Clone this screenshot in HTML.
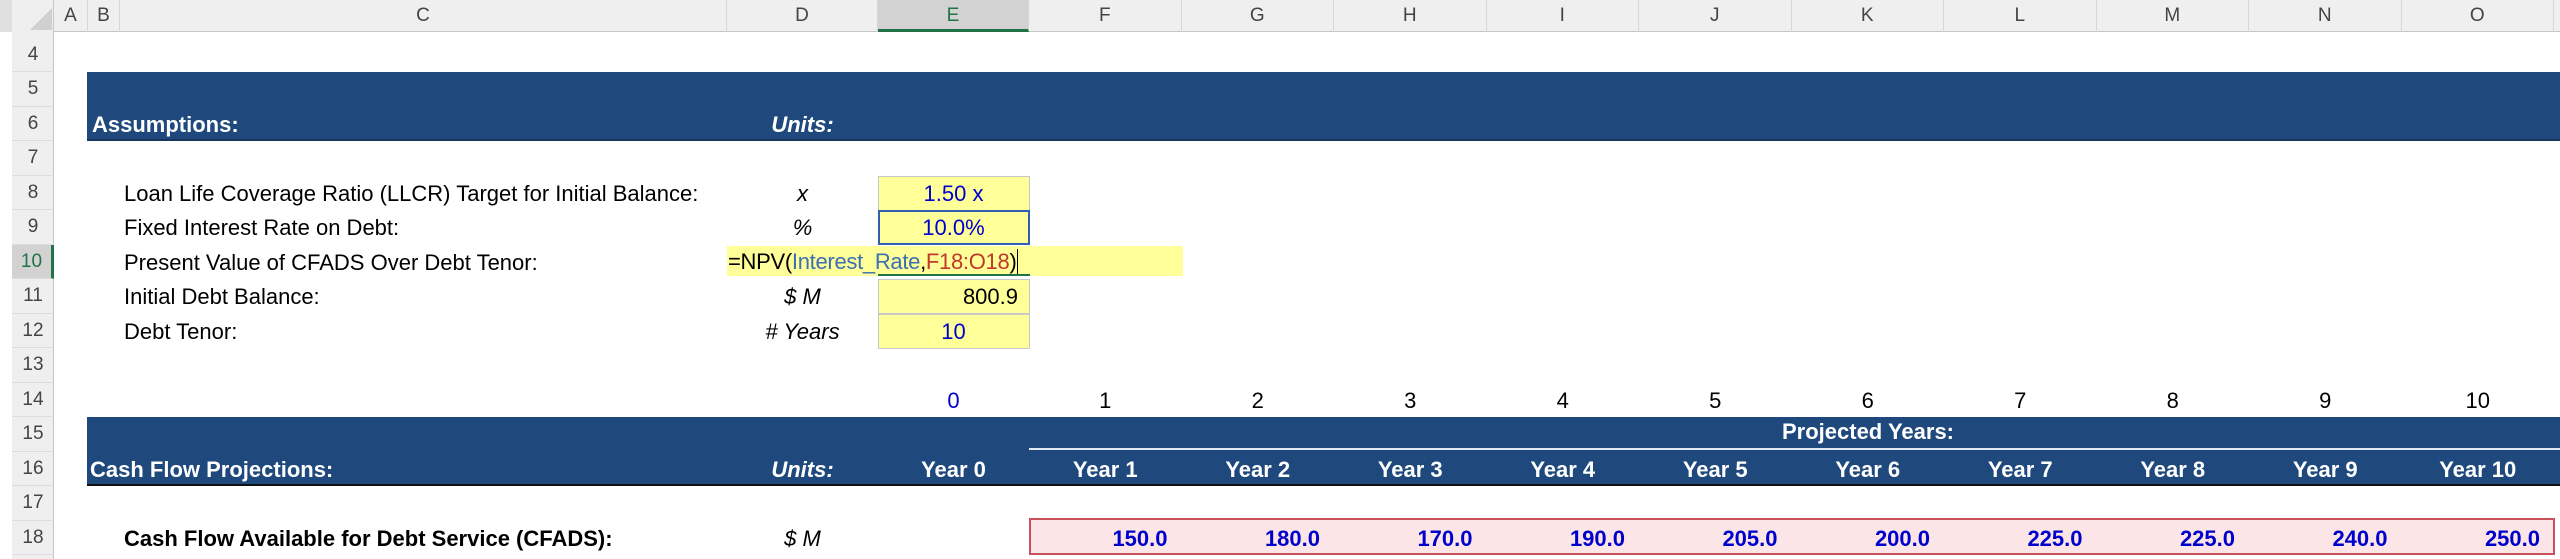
<!DOCTYPE html>
<html><head><meta charset="utf-8"><style>
*{margin:0;padding:0;box-sizing:border-box}
body{width:2560px;height:559px;overflow:hidden;background:#fff;font-family:"Liberation Sans",sans-serif;position:relative}
.a{position:absolute;white-space:nowrap}
.ch{top:0;height:32px;line-height:32px;text-align:center;font-size:19px;color:#444;border-right:1px solid #d6d6d6}
.rh{left:12px;width:42px;height:34.5px;line-height:34.5px;text-align:center;font-size:19px;color:#444;border-bottom:1px solid #dcdcdc}
.t{font-size:22px;line-height:36px;height:34.5px}
.c{text-align:center}
.w{color:#fff;font-weight:bold}
.blue{color:#0000cc}
.y{background:#ffff99;border:1px solid #c8c8c8}
.v{text-align:right;padding-right:14px;font-weight:bold;color:#0000cc}
</style></head><body>
<div class="a" style="left:0;top:0;width:2560px;height:32px;background:#efefef;border-bottom:1px solid #c6c6c6"></div>
<div class="a" style="left:0;top:0;width:12px;height:32px;background:#e0e0e0"></div>
<div class="a" style="left:12px;top:0;width:42px;height:559px;background:#efefef;border-right:1px solid #c6c6c6"></div>
<svg class="a" style="left:28px;top:8px" width="24" height="22"><polygon points="24,0 24,22 2,22" fill="#d0d0d0"/></svg>
<div class="a ch" style="left:54px;width:34px">A</div>
<div class="a ch" style="left:88px;width:32px">B</div>
<div class="a ch" style="left:120px;width:607px">C</div>
<div class="a ch" style="left:727px;width:151px">D</div>
<div class="a ch" style="left:878px;width:151px;background:#d2d2d2;color:#217346;border-bottom:3px solid #217346">E</div>
<div class="a ch" style="left:1029px;width:152.5px">F</div>
<div class="a ch" style="left:1181.5px;width:152.5px">G</div>
<div class="a ch" style="left:1334px;width:152.5px">H</div>
<div class="a ch" style="left:1486.5px;width:152.5px">I</div>
<div class="a ch" style="left:1639px;width:152.5px">J</div>
<div class="a ch" style="left:1791.5px;width:152.5px">K</div>
<div class="a ch" style="left:1944px;width:152.5px">L</div>
<div class="a ch" style="left:2096.5px;width:152.5px">M</div>
<div class="a ch" style="left:2249px;width:152.5px">N</div>
<div class="a ch" style="left:2401.5px;width:152.5px">O</div>
<div class="a rh" style="top:37.5px">4</div>
<div class="a rh" style="top:72px">5</div>
<div class="a rh" style="top:106.5px">6</div>
<div class="a rh" style="top:141px">7</div>
<div class="a rh" style="top:175.5px">8</div>
<div class="a rh" style="top:210px">9</div>
<div class="a rh" style="top:244.5px;background:#d2d2d2;color:#217346;border-right:3px solid #217346">10</div>
<div class="a rh" style="top:279px">11</div>
<div class="a rh" style="top:313.5px">12</div>
<div class="a rh" style="top:348px">13</div>
<div class="a rh" style="top:382.5px">14</div>
<div class="a rh" style="top:417px">15</div>
<div class="a rh" style="top:451.5px">16</div>
<div class="a rh" style="top:486px">17</div>
<div class="a rh" style="top:520.5px">18</div>
<div class="a" style="left:87px;top:72px;width:2473px;height:69px;background:#1f497d;border-bottom:2px solid #17375e"></div>
<div class="a" style="left:87px;top:417px;width:2473px;height:69px;background:#1f497d;border-bottom:2px solid #111"></div>
<div class="a" style="left:1029px;top:448px;width:1531px;height:2px;background:#dfe8f3"></div>
<div class="a t w" style="left:92px;top:106.5px">Assumptions:</div>
<div class="a t w c" style="left:727px;top:106.5px;width:151px;font-style:italic">Units:</div>
<div class="a t" style="left:124px;top:175.5px">Loan Life Coverage Ratio (LLCR) Target for Initial Balance:</div>
<div class="a t" style="left:124px;top:210px">Fixed Interest Rate on Debt:</div>
<div class="a t" style="left:124px;top:244.5px">Present Value of CFADS Over Debt Tenor:</div>
<div class="a t" style="left:124px;top:279px">Initial Debt Balance:</div>
<div class="a t" style="left:124px;top:313.5px">Debt Tenor:</div>
<div class="a t c" style="left:727px;width:151px;top:175.5px;font-style:italic">x</div>
<div class="a t c" style="left:727px;width:151px;top:210px;font-style:italic">%</div>
<div class="a t c" style="left:727px;width:151px;top:279px;font-style:italic">$ M</div>
<div class="a t c" style="left:727px;width:151px;top:313.5px;font-style:italic"># Years</div>
<div class="a y" style="left:878px;top:175.5px;width:152px;height:35px"></div>
<div class="a y" style="left:878px;top:210px;width:152px;height:35px;border:2px solid #2f5fae"></div>
<div class="a y" style="left:878px;top:279px;width:152px;height:35px"></div>
<div class="a y" style="left:878px;top:313.5px;width:152px;height:35px"></div>
<div class="a t c blue" style="left:878px;width:151px;top:175.5px">1.50 x</div>
<div class="a t c blue" style="left:878px;width:151px;top:210px">10.0%</div>
<div class="a t" style="left:878px;width:140px;top:279px;text-align:right">800.9</div>
<div class="a t c blue" style="left:878px;width:151px;top:313.5px">10</div>
<div class="a" style="left:727px;top:246px;width:456px;height:30px;background:#ffff99"></div>
<div class="a" style="left:878px;top:274px;width:152px;height:2px;background:#217346"></div>
<div class="a" style="left:728px;top:246px;font-size:22px;line-height:31px;letter-spacing:-0.3px">=NPV(<span style="color:#3a6fb5">Interest_Rate</span>,<span style="color:#c0392b">F18:O18</span>)<span style="border-left:1px solid #000;margin-left:1px"></span></div>
<div class="a t c blue" style="left:878px;width:151px;top:382.5px">0</div>
<div class="a t c" style="left:1029px;width:152.5px;top:382.5px">1</div>
<div class="a t c" style="left:1181.5px;width:152.5px;top:382.5px">2</div>
<div class="a t c" style="left:1334px;width:152.5px;top:382.5px">3</div>
<div class="a t c" style="left:1486.5px;width:152.5px;top:382.5px">4</div>
<div class="a t c" style="left:1639px;width:152.5px;top:382.5px">5</div>
<div class="a t c" style="left:1791.5px;width:152.5px;top:382.5px">6</div>
<div class="a t c" style="left:1944px;width:152.5px;top:382.5px">7</div>
<div class="a t c" style="left:2096.5px;width:152.5px;top:382.5px">8</div>
<div class="a t c" style="left:2249px;width:152.5px;top:382.5px">9</div>
<div class="a t c" style="left:2401.5px;width:152.5px;top:382.5px">10</div>
<div class="a t w c" style="left:1758px;width:220px;top:414px">Projected Years:</div>
<div class="a t w" style="left:90px;top:451.5px">Cash Flow Projections:</div>
<div class="a t w c" style="left:727px;width:151px;top:451.5px;font-style:italic">Units:</div>
<div class="a t w c" style="left:878px;width:151px;top:451.5px">Year 0</div>
<div class="a t w c" style="left:1029px;width:152.5px;top:451.5px">Year 1</div>
<div class="a t w c" style="left:1181.5px;width:152.5px;top:451.5px">Year 2</div>
<div class="a t w c" style="left:1334px;width:152.5px;top:451.5px">Year 3</div>
<div class="a t w c" style="left:1486.5px;width:152.5px;top:451.5px">Year 4</div>
<div class="a t w c" style="left:1639px;width:152.5px;top:451.5px">Year 5</div>
<div class="a t w c" style="left:1791.5px;width:152.5px;top:451.5px">Year 6</div>
<div class="a t w c" style="left:1944px;width:152.5px;top:451.5px">Year 7</div>
<div class="a t w c" style="left:2096.5px;width:152.5px;top:451.5px">Year 8</div>
<div class="a t w c" style="left:2249px;width:152.5px;top:451.5px">Year 9</div>
<div class="a t w c" style="left:2401.5px;width:152.5px;top:451.5px">Year 10</div>
<div class="a t" style="left:124px;top:520.5px;font-weight:bold">Cash Flow Available for Debt Service (CFADS):</div>
<div class="a t c" style="left:727px;width:151px;top:520.5px;font-style:italic">$ M</div>
<div class="a" style="left:1029px;top:518px;width:1526px;height:37px;background:#fbe5e6;border:2px solid #c8505a"></div>
<div class="a t v" style="left:1029px;width:152.5px;top:520.5px">150.0</div>
<div class="a t v" style="left:1181.5px;width:152.5px;top:520.5px">180.0</div>
<div class="a t v" style="left:1334px;width:152.5px;top:520.5px">170.0</div>
<div class="a t v" style="left:1486.5px;width:152.5px;top:520.5px">190.0</div>
<div class="a t v" style="left:1639px;width:152.5px;top:520.5px">205.0</div>
<div class="a t v" style="left:1791.5px;width:152.5px;top:520.5px">200.0</div>
<div class="a t v" style="left:1944px;width:152.5px;top:520.5px">225.0</div>
<div class="a t v" style="left:2096.5px;width:152.5px;top:520.5px">225.0</div>
<div class="a t v" style="left:2249px;width:152.5px;top:520.5px">240.0</div>
<div class="a t v" style="left:2401.5px;width:152.5px;top:520.5px">250.0</div>
</body></html>
